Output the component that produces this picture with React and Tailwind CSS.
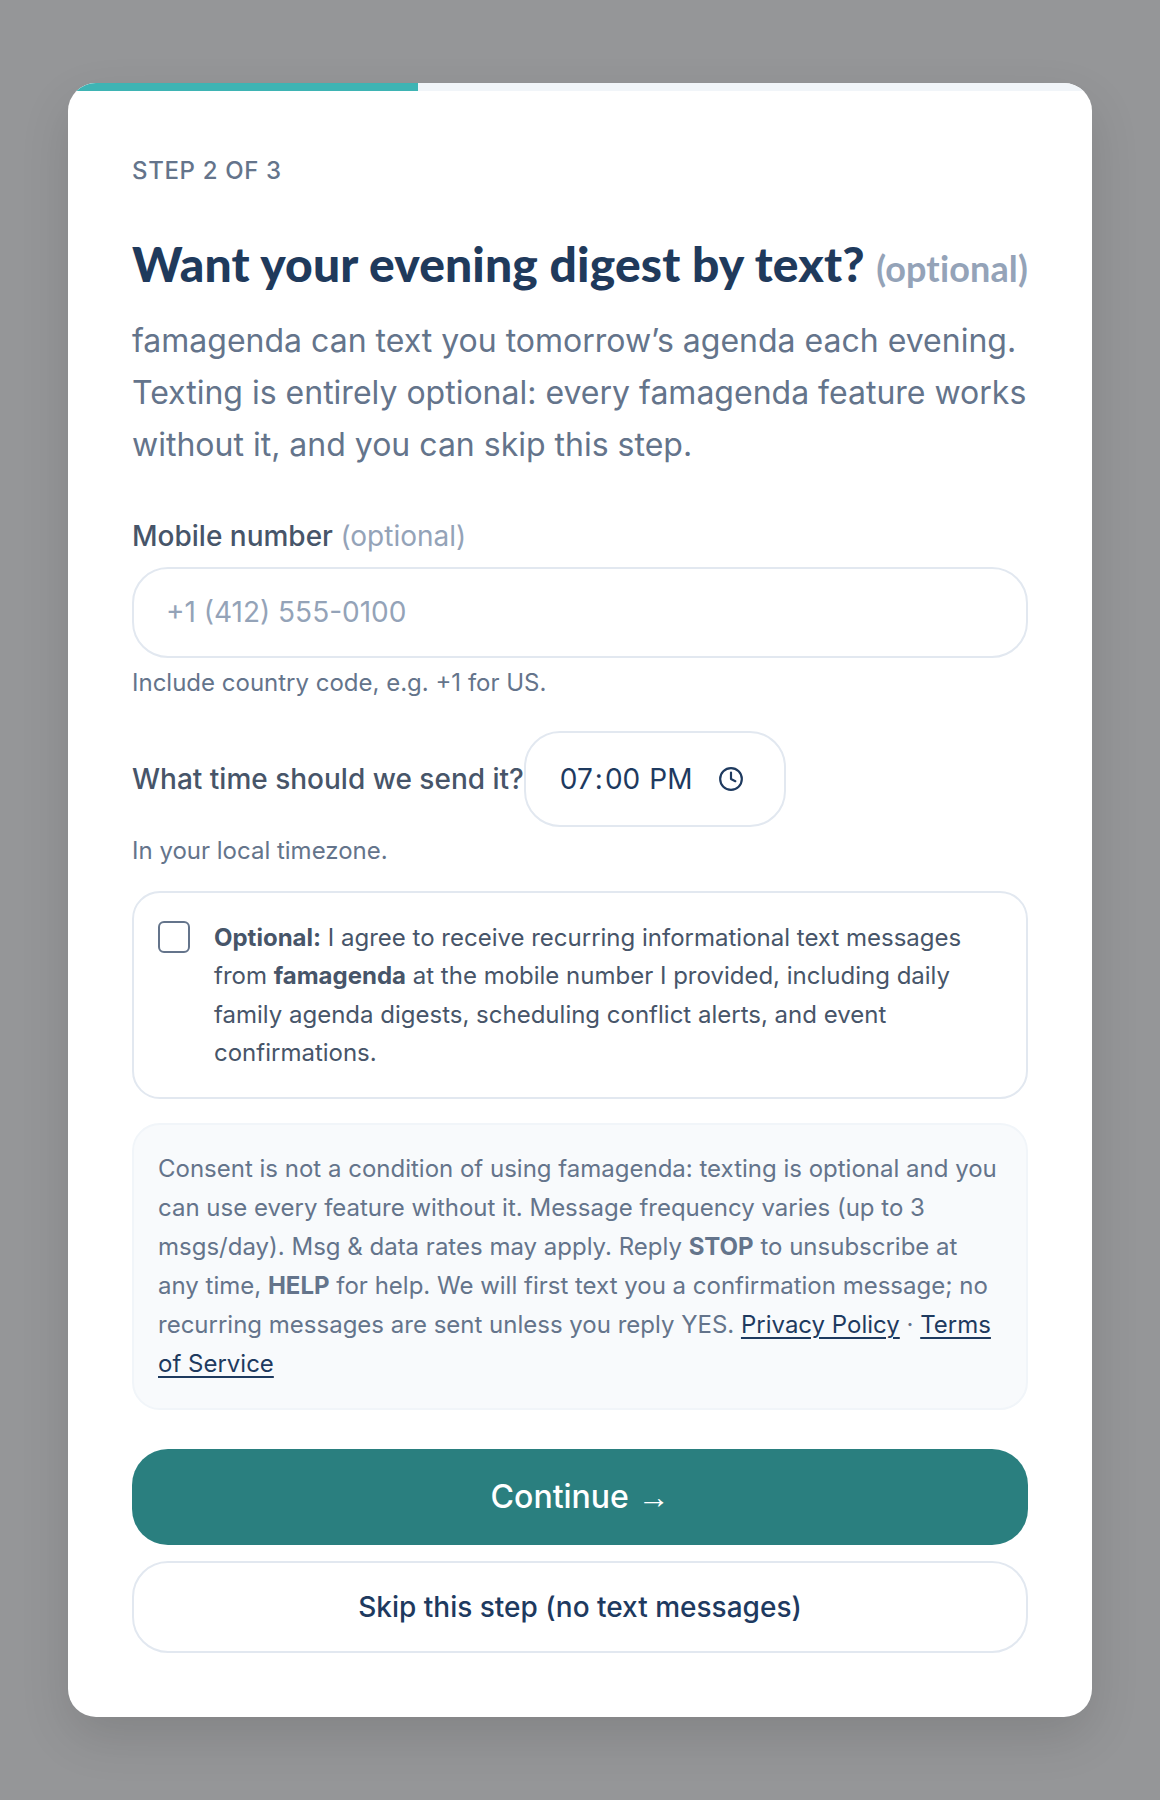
import React from 'react';
import { Clock } from 'lucide-react';

const App = () => {
	return (
		<div className="min-h-[1800px] bg-[#959698] flex items-center justify-center px-[68px] font-['Inter',sans-serif]">
			<div className="w-full rounded-[28px] bg-white overflow-hidden shadow-[0_20px_50px_rgba(0,0,0,0.12)]">
				<div className="h-2 bg-[#f1f5f9]">
					<div className="h-2 w-[350px] bg-[#3eb4b4]" />
				</div>
				<div className="px-16 pt-[62px] pb-[64px]">
					<p className="text-[24px] leading-[36px] tracking-[0.65px] text-[#64748b] font-medium">STEP 2 OF 3</p>
					<h1 className="mt-[47px] text-[#1f3a5c] font-['Lato',sans-serif] font-black text-[48px] leading-[56px] tracking-[0.14px] whitespace-nowrap">
						Want your evening digest by text?{' '}
						<span className="text-[#94a3b8] font-bold text-[36px]">(optional)</span>
					</h1>
					<p className="mt-[19px] text-[32px] leading-[52px] text-[#64748b]">
						famagenda can text you tomorrow’s agenda each evening. Texting is entirely optional: every famagenda feature works without it, and you can skip this step.
					</p>

					<label htmlFor="phone" className="block mt-[44px] text-[28px] leading-[42px] font-medium text-[#475569]">
						Mobile number <span className="text-[#94a3b8] font-normal">(optional)</span>
					</label>
					<input
						id="phone"
						type="tel"
						placeholder="+1 (412) 555-0100"
						className="block w-full mt-[10px] h-[91px] rounded-[36px] border-2 border-[#e2e8f0] px-[32px] text-[28px] text-[#1e3a5f] placeholder:text-[#94a3b8] outline-none"
					/>
					<p className="mt-[7px] text-[24px] leading-[36px] text-[#64748b]">Include country code, e.g. +1 for US.</p>

					<div className="mt-[30px] flex items-center">
						<label htmlFor="send-time" className="text-[28px] font-medium text-[#475569] whitespace-nowrap">What time should we send it?</label>
						<div className="h-[96px] w-[262px] rounded-[36px] border-2 border-[#e2e8f0] pl-[32px] pr-[40px] flex items-center justify-between">
							<input
								id="send-time"
								type="time"
								defaultValue="19:00"
								className="w-[140px] text-[28px] text-[#1e3a5f] outline-none [&::-webkit-calendar-picker-indicator]:hidden [&::-webkit-datetime-edit-hour-field]:px-[2px] [&::-webkit-datetime-edit-minute-field]:px-[2px] [&::-webkit-datetime-edit-ampm-field]:px-[2px]"
							/>
							<Clock size={26} strokeWidth={2} className="shrink-0 text-[#1e3a5f]" />
						</div>
					</div>
					<p className="mt-[6px] text-[24px] leading-[36px] text-[#64748b]">In your local timezone.</p>

					<div className="mt-[22px] rounded-[28px] border-2 border-[#e2e8f0] pt-[26px] pb-[25px] pl-[24px] pr-[24px] flex gap-[24px]">
						<input type="checkbox" className="appearance-none mt-[2px] w-8 h-8 shrink-0 rounded-[6px] border-2 border-[#64748b] bg-white" />
						<p className="text-[24px] leading-[38.4px] text-[#475569]">
							<strong className="font-bold">Optional:</strong> I agree to receive recurring informational text messages from <strong className="font-bold">famagenda</strong> at the mobile number I provided, including daily family agenda digests, scheduling conflict alerts, and event confirmations.
						</p>
					</div>

					<div className="mt-[24px] rounded-[28px] border-2 border-[#f1f5f9] bg-[#f8fafc] px-[24px] pt-[24px] pb-[25px] text-[24px] leading-[39px] text-[#64748b]">
						Consent is not a condition of using famagenda: texting is optional and you can use every feature without it. Message frequency varies (up to 3 msgs/day). Msg &amp; data rates may apply. Reply <strong className="font-bold">STOP</strong> to unsubscribe at any time, <strong className="font-bold">HELP</strong> for help. We will first text you a confirmation message; no recurring messages are sent unless you reply YES. <a href="#privacy" className="underline decoration-2 underline-offset-[4px] text-[#1e3a5f]">Privacy Policy</a> · <a href="#terms" className="underline decoration-2 underline-offset-[4px] text-[#1e3a5f]">Terms of Service</a>
					</div>

					<button className="mt-[39px] w-full h-[96px] rounded-[36px] bg-[#2a7f7f] text-white text-[32px] font-medium">
						Continue <span className="font-['Liberation_Sans',sans-serif]">→</span>
					</button>
					<button className="mt-[16px] w-full h-[92px] rounded-[36px] border-2 border-[#e2e8f0] bg-white text-[#1e3a5f] text-[28px] font-medium">
						Skip this step (no text messages)
					</button>
				</div>
			</div>
		</div>
	);
};

export default App;
